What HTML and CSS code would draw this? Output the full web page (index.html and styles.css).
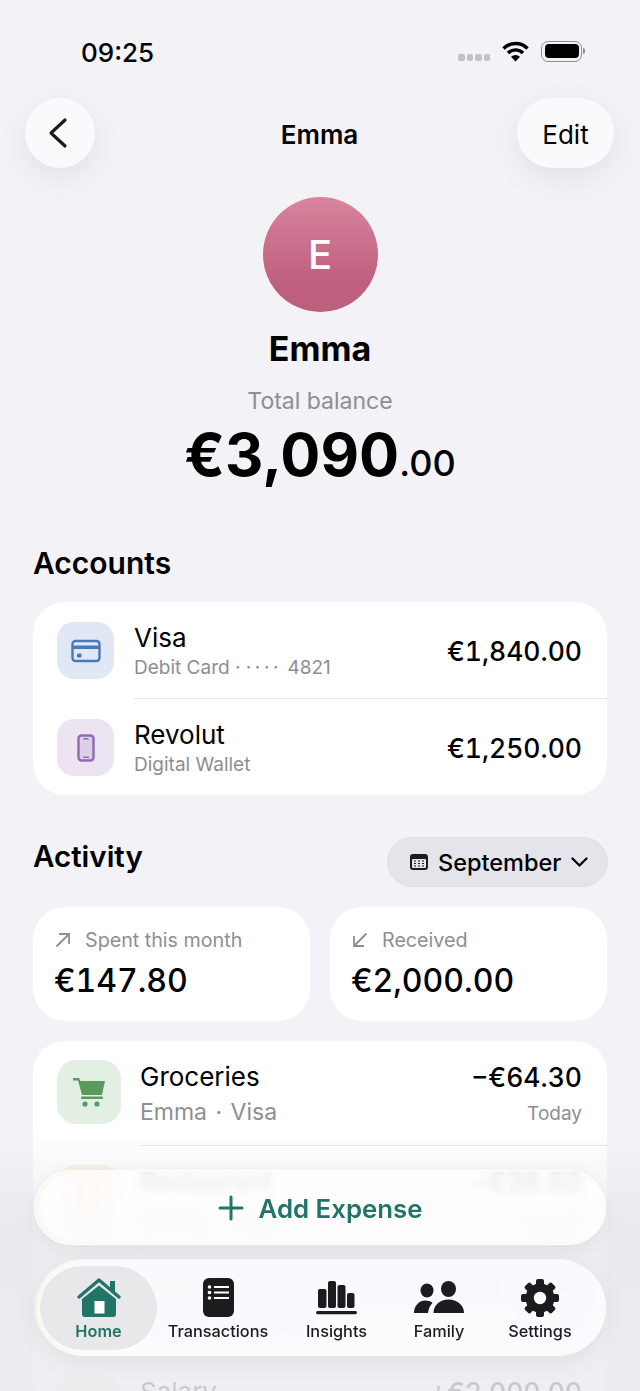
FILE: index.html
```html
<!DOCTYPE html>
<html lang="en">
<head>
    <meta charset="UTF-8">
    <meta name="viewport" content="width=device-width, initial-scale=1.0">
    <title>Emma</title>
    <link rel="stylesheet" href="styles.css">
</head>
<body>
    <div class="page">
        <!-- status bar -->
        <div class="status">
            <span class="time">09:25</span>
            <div class="status-icons">
                <div class="signal"><i></i><i></i><i></i><i></i></div>
                <svg class="wifi" width="27" height="21" viewBox="0 0 27 21">
                    <path d="M1.5 7.5a17 17 0 0 1 24 0" fill="none" stroke="#000" stroke-width="3.4"/>
                    <path d="M6 12a10.6 10.6 0 0 1 15 0" fill="none" stroke="#000" stroke-width="3.4"/>
                    <path d="M13.500 20.500 9 15.800a6.400 6.400 0 0 1 9 0z"/>
                </svg>
                <div class="battery"><div class="battery-fill"></div></div>
            </div>
        </div>

        <!-- top nav -->
        <div class="topbar">
            <button class="round-btn back">
                <svg width="22" height="32" viewBox="0 0 22 32"><path d="M18 3 4 16 18 29" fill="none" stroke="#1c1c1e" stroke-width="3.200" stroke-linecap="round" stroke-linejoin="round"/></svg>
            </button>
            <div class="topbar-title">Emma</div>
            <button class="round-btn edit">Edit</button>
        </div>

        <!-- profile -->
        <div class="profile">
            <div class="avatar">E</div>
            <div class="profile-name">Emma</div>
            <div class="balance-label">Total balance</div>
            <div class="balance">€3,090<span class="cents">.00</span></div>
        </div>

        <!-- accounts -->
        <h2 class="heading accounts-heading">Accounts</h2>
        <div class="card accounts">
            <div class="account">
                <div class="acc-icon blue">
                    <svg width="30" height="24" viewBox="0 0 30 24"><rect x="1.500" y="2" width="27" height="20" rx="3" fill="#dfe8f4" stroke="#4a78b8" stroke-width="2.400"/><rect x="1.500" y="6.500" width="27" height="3.500" fill="#4a78b8"/><rect x="6" y="14.500" width="4.500" height="4" rx="1" fill="#4a78b8"/></svg>
                </div>
                <div class="acc-text">
                    <div class="acc-name">Visa</div>
                    <div class="acc-sub">Debit Card · <span class="acc-dots">····</span> 4821</div>
                </div>
                <div class="acc-amount">€1,840.00</div>
            </div>
            <div class="account">
                <div class="acc-icon purple">
                    <svg width="18" height="28" viewBox="0 0 18 28"><rect x="1.500" y="1.500" width="15" height="25" rx="3" fill="#dccfe8" stroke="#9268b4" stroke-width="2.400"/><rect x="6.500" y="4" width="5" height="1.600" fill="#9268b4"/><rect x="6" y="22.500" width="6" height="1.400" fill="#9268b4"/></svg>
                </div>
                <div class="acc-text">
                    <div class="acc-name">Revolut</div>
                    <div class="acc-sub">Digital Wallet</div>
                </div>
                <div class="acc-amount">€1,250.00</div>
            </div>
        </div>

        <!-- activity -->
        <div class="activity-head">
            <h2 class="heading">Activity</h2>
            <div class="month-pill">
                <svg width="18" height="16" viewBox="0 0 18 16"><rect x="0" y="0" width="18" height="16" rx="3" fill="#1c1c1e"/><rect x="2" y="5" width="14" height="9" rx="1" fill="#e4e4ea"/><path d="M4 7h2M8 7h2M12 7h2M4 9.500h2M8 9.500h2M12 9.500h2M4 12h2M8 12h2M12 12h2" stroke="#1c1c1e" stroke-width="1.200"/></svg>
                <span>September</span>
                <svg width="17" height="10" viewBox="0 0 17 10"><path d="M1.500 1.500 8.500 8.500 15.500 1.500" fill="none" stroke="#000" stroke-width="2.200" stroke-linecap="round" stroke-linejoin="round"/></svg>
            </div>
        </div>

        <div class="stats">
            <div class="card stat">
                <div class="stat-label">
                    <svg width="16" height="16" viewBox="0 0 16 16"><path d="M1.500 14.500 14 2M4 2h10v10" fill="none" stroke="#8e8e93" stroke-width="1.800"/></svg>
                    <span>Spent this month</span>
                </div>
                <div class="stat-value">€147.80</div>
            </div>
            <div class="card stat">
                <div class="stat-label">
                    <svg width="16" height="16" viewBox="0 0 16 16"><path d="M14.500 1.500 2 14M2 4v10h10" fill="none" stroke="#8e8e93" stroke-width="1.800"/></svg>
                    <span>Received</span>
                </div>
                <div class="stat-value">€2,000.00</div>
            </div>
        </div>

        <!-- transactions -->
        <div class="card list">
            <div class="tx">
                <div class="tx-icon green">
                    <svg width="34" height="32" viewBox="0 0 34 32" fill="#5a9a5c"><path d="M1 2h6l1.500 3H33l-3 14H10L6 4.500H1z"/><rect x="9" y="20.500" width="22" height="2.500" rx="1"/><circle cx="13" cy="28" r="2.600"/><circle cx="25" cy="28" r="2.600"/></svg>
                </div>
                <div class="tx-text">
                    <div class="tx-name">Groceries</div>
                    <div class="tx-sub">Emma · Visa</div>
                </div>
                <div class="tx-right">
                    <div class="tx-amount">−€64.30</div>
                    <div class="tx-date">Today</div>
                </div>
            </div>
            <div class="tx">
                <div class="tx-icon orange">
                    <svg width="34" height="44" viewBox="0 0 34 44" fill="#f8a040"><rect x="7" y="2" width="6" height="40" rx="3"/><rect x="21" y="2" width="6" height="40" rx="3"/></svg>
                </div>
                <div class="tx-text">
                    <div class="tx-name">Restaurant</div>
                    <div class="tx-sub">Emma · Visa</div>
                </div>
                <div class="tx-right">
                    <div class="tx-amount">−€38.50</div>
                    <div class="tx-date">Sep 21</div>
                </div>
            </div>
            <div class="tx">
                <div class="tx-icon orange">
                    <svg width="34" height="34" viewBox="0 0 34 34" fill="#f8a040"><circle cx="17" cy="17" r="12"/></svg>
                </div>
                <div class="tx-text">
                    <div class="tx-name">Children</div>
                    <div class="tx-sub">Emma · Revolut</div>
                </div>
                <div class="tx-right">
                    <div class="tx-amount">−€45.00</div>
                    <div class="tx-date">Sep 20</div>
                </div>
            </div>
            <div class="tx">
                <div class="tx-icon green"></div>
                <div class="tx-text">
                    <div class="tx-name">Salary</div>
                    <div class="tx-sub">Emma · Visa</div>
                </div>
                <div class="tx-right">
                    <div class="tx-amount">+€2,000.00</div>
                    <div class="tx-date">Sep 1</div>
                </div>
            </div>
        </div>

        <!-- bottom fade + floating controls -->
        <div class="bottom-fade"></div>

        <button class="add-expense">
            <svg width="26" height="26" viewBox="0 0 26 26"><path d="M13 2v22M2 13h22" fill="none" stroke="#217568" stroke-width="3" stroke-linecap="round"/></svg>
            <span>Add Expense</span>
        </button>

        <nav class="tabbar">
            <div class="tab active">
                <svg width="44" height="40" viewBox="0 0 44 40">
                    <path d="M2 19 22 2l20 17" fill="none" stroke="#217568" stroke-width="3.400" stroke-linecap="round" stroke-linejoin="round"/>
                    <rect x="33" y="3" width="5" height="10" fill="#217568"/>
                    <path d="M5 21 22 7.500 39 21v15a3 3 0 0 1-3 3H8a3 3 0 0 1-3-3z" fill="#217568"/>
                    <rect x="17.500" y="23" width="10" height="12.500" fill="#fff"/>
                </svg>
                <span>Home</span>
            </div>
            <div class="tab">
                <svg width="31" height="40" viewBox="0 0 31 40">
                    <rect width="31" height="39" rx="6" fill="#1c1c1e"/>
                    <path d="M11 9h15M11 14.500h15M11 20h15" stroke="#fff" stroke-width="2"/>
                    <circle cx="6.500" cy="9" r="1.800" fill="#fff"/><circle cx="6.500" cy="14.500" r="1.800" fill="#fff"/><circle cx="6.500" cy="20" r="1.800" fill="#fff"/>
                </svg>
                <span>Transactions</span>
            </div>
            <div class="tab">
                <svg width="41" height="40" viewBox="0 0 41 40" fill="#1c1c1e">
                    <rect x="2" y="11" width="8.500" height="19" rx="2"/>
                    <rect x="12" y="3" width="8" height="27" rx="2"/>
                    <rect x="21.500" y="7" width="8" height="23" rx="2"/>
                    <rect x="31" y="15" width="7.500" height="15" rx="2"/>
                    <rect x="0" y="33" width="41" height="3.200" rx="1.600"/>
                </svg>
                <span>Insights</span>
            </div>
            <div class="tab">
                <svg width="50" height="40" viewBox="0 0 50 40" fill="#1c1c1e">
                    <ellipse cx="13" cy="12.500" rx="6.500" ry="7"/>
                    <ellipse cx="34.500" cy="11" rx="7.500" ry="8"/>
                    <path d="M0 35c0-7 5-12.500 11-12.500 3 0 5.500.8 7.500 2.300-2.500 2.700-4 6-4.500 10.200z"/>
                    <path d="M19.500 35c0-8 6.500-13.500 15-13.500S50 27 50 35z"/>
                </svg>
                <span>Family</span>
            </div>
            <div class="tab">
                <svg width="40" height="40" viewBox="0 0 40 40">
                    <g fill="#1c1c1e">
                        <circle cx="20" cy="20" r="14.500"/>
                        <rect x="16" y="1" width="8" height="38" rx="2"/>
                        <rect x="16" y="1" width="8" height="38" rx="2" transform="rotate(45 20 20)"/>
                        <rect x="16" y="1" width="8" height="38" rx="2" transform="rotate(90 20 20)"/>
                        <rect x="16" y="1" width="8" height="38" rx="2" transform="rotate(135 20 20)"/>
                    </g>
                    <circle cx="20" cy="20" r="6.200" fill="#fafafd"/>
                </svg>
                <span>Settings</span>
            </div>
        </nav>
    </div>
</body>
</html>
```

FILE: styles.css
```css
* {
    margin: 0;
    padding: 0;
    box-sizing: border-box;
}

html, body {
    width: 640px;
    height: 1391px;
    overflow: hidden;
    background-color: #f2f2f7;
    font-family: Inter, "Liberation Sans", sans-serif;
    color: #000;
}

.page {
    position: relative;
    width: 640px;
    height: 1391px;
    overflow: hidden;
}

/* status bar */
.status {
    display: flex;
    justify-content: space-between;
    align-items: center;
    height: 98px;
    padding: 7px 58px 0 81px;
}

.time {
    font-size: 26px;
    font-weight: 500;
    line-height: 32px;
}

.status-icons {
    display: flex;
    align-items: center;
    gap: 12px;
    margin-top: -3px;
}

.signal {
    display: flex;
    gap: 2px;
    margin-top: 13px;
}

.signal i {
    width: 6.500px;
    height: 6.500px;
    border-radius: 2px;
    background-color: #c3c3c7;
}

.battery {
    position: relative;
    width: 41px;
    height: 21px;
    padding: 2.500px;
    border: 1.500px solid #8e8e93;
    border-radius: 7px;
}

.battery:after {
    content: "";
    position: absolute;
    right: -4px;
    top: 6px;
    width: 2px;
    height: 6px;
    border-radius: 0 2px 2px 0;
    background-color: #8e8e93;
}

.battery-fill {
    height: 100%;
    border-radius: 4px;
    background-color: #000;
}

/* top nav */
.topbar {
    display: grid;
    grid-template-columns: 1fr auto 1fr;
    align-items: center;
    height: 70px;
    padding: 0 26px 0 25px;
}

.round-btn {
    display: flex;
    align-items: center;
    justify-content: center;
    height: 70px;
    border: none;
    border-radius: 35px;
    background-color: #fafafd;
    box-shadow: 0 10px 30px rgba(0, 0, 0, 0.07);
    font-family: inherit;
    font-size: 26px;
    color: #000;
}

.back {
    width: 70px;
    padding-right: 4px;
}

.edit {
    width: 97px;
    padding-top: 2px;
    justify-self: end;
}

.topbar-title {
    padding-top: 2px;
    font-size: 26px;
    font-weight: 600;
}

/* profile */
.profile {
    display: flex;
    flex-direction: column;
    align-items: center;
    margin-top: 29px;
}

.avatar {
    display: flex;
    align-items: center;
    justify-content: center;
    width: 115px;
    height: 115px;
    border-radius: 50%;
    background: linear-gradient(180deg, #d9849e 0%, #bd5f7d 75%);
    color: #fff;
    font-size: 40px;
    font-weight: 500;
}

.profile-name {
    margin-top: 15px;
    font-size: 34px;
    font-weight: 700;
    line-height: 44px;
}

.balance-label {
    margin-top: 15px;
    font-size: 23px;
    line-height: 30px;
    color: #8e8e93;
}

.balance {
    margin-top: 3px;
    font-size: 59.500px;
    font-weight: 700;
    line-height: 70px;
}

.cents {
    font-size: 36px;
    font-weight: 500;
}

/* sections */
.heading {
    font-size: 30px;
    font-weight: 600;
    line-height: 38px;
}

.accounts-heading {
    margin: 46px 33px 20px;
}

.card {
    background-color: #fff;
    border-radius: 32px;
}

.accounts {
    margin: 0 33px;
    height: 193px;
}

.account {
    display: flex;
    align-items: center;
    height: 97px;
    padding: 0 25px 0 24px;
}

.acc-icon {
    display: flex;
    align-items: center;
    justify-content: center;
    flex-shrink: 0;
    width: 57px;
    height: 57px;
    border-radius: 17px;
}

.blue {
    background-color: #dfe8f4;
}

.purple {
    background-color: #ece4f1;
}

.green {
    background-color: #e3efe3;
}

.orange {
    background-color: #fcefe0;
}

.acc-text {
    flex: 1;
    align-self: stretch;
    display: flex;
    flex-direction: column;
    justify-content: center;
    padding-top: 2px;
    margin-left: 20px;
}

.acc-name {
    font-size: 26px;
    line-height: 32px;
}

.acc-sub {
    margin-top: 1px;
    font-size: 19px;
    line-height: 26px;
    color: #8e8e93;
}

.acc-dots {
    letter-spacing: 3.600px;
}

.account:first-child {
    position: relative;
}

.account:first-child:after {
    content: "";
    position: absolute;
    left: 101px;
    right: 0;
    top: 96px;
    height: 1px;
    background-color: #e4e4e8;
}

.acc-amount {
    font-size: 26.500px;
    font-weight: 500;
    font-variant-numeric: tabular-nums;
}

/* activity */
.activity-head {
    display: flex;
    justify-content: space-between;
    align-items: flex-start;
    margin: 42px 32px 20px 33px;
}

.activity-head .heading {
    margin-top: 0;
    font-size: 29.500px;
}

.month-pill {
    display: flex;
    align-items: center;
    gap: 10px;
    width: 221px;
    height: 50px;
    padding-left: 22px;
    border-radius: 25px;
    border: 1px solid #e0e0e6;
    background-color: #e4e4ea;
    font-size: 23.500px;
    font-weight: 500;
}

.stats {
    display: flex;
    gap: 20px;
    margin: 0 33px 20px;
}

.stat {
    flex: 1;
    height: 114px;
    padding: 21px 22px 0;
}

.stat-label {
    display: flex;
    align-items: center;
    gap: 14px;
    font-size: 19.700px;
    line-height: 24px;
    color: #8e8e93;
}

.stat-value {
    margin: 9px 0 0 -1px;
    font-size: 32px;
    font-weight: 500;
    line-height: 40px;
    font-variant-numeric: tabular-nums;
}

/* transaction list */
.list {
    margin: 0 33px;
}

.tx {
    position: relative;
    display: flex;
    align-items: flex-start;
    height: 105px;
    padding: 19px 25px 0 24px;
}

.tx:after {
    content: "";
    position: absolute;
    left: 107px;
    right: 0;
    bottom: 0;
    height: 1px;
    background-color: #e4e4e8;
}

.tx-icon {
    display: flex;
    align-items: center;
    justify-content: center;
    flex-shrink: 0;
    width: 64px;
    height: 64px;
    border-radius: 19px;
}

.tx-text {
    flex: 1;
    margin-left: 19px;
}

.tx-name {
    font-size: 26px;
    line-height: 34px;
}

.tx-sub {
    margin-top: 1px;
    font-size: 23px;
    word-spacing: 2px;
    line-height: 34px;
    color: #8e8e93;
}

.tx-right {
    text-align: right;
}

.tx-amount {
    font-size: 26.500px;
    font-weight: 500;
    line-height: 34px;
    font-variant-numeric: tabular-nums;
}

.tx-date {
    margin-top: 3px;
    font-size: 19px;
    line-height: 34px;
    color: #8e8e93;
}

/* floating stuff over the list */
.bottom-fade {
    position: absolute;
    left: 0;
    right: 0;
    top: 1130px;
    bottom: 0;
    background: linear-gradient(180deg, rgba(236, 236, 240, 0) 0%, rgba(232, 232, 236, 0.8) 40%, rgba(236, 236, 240, 0.85) 100%);
}

.add-expense {
    position: absolute;
    left: 34px;
    top: 1170px;
    display: flex;
    align-items: center;
    justify-content: center;
    gap: 15px;
    width: 572px;
    height: 75px;
    border: 1px solid rgba(255, 255, 255, 0.8);
    border-radius: 38px;
    background-color: rgba(255, 255, 255, 0.85);
    backdrop-filter: blur(4px);
    box-shadow: 0 4px 20px rgba(0, 0, 0, 0.05), inset 3px 0 5px rgba(250, 236, 216, 0.5);
    font-family: inherit;
    font-size: 25.800px;
    font-weight: 600;
    color: #217568;
}

.add-expense span {
    padding-top: 2px;
}

.tabbar {
    position: absolute;
    left: 35px;
    top: 1259px;
    display: grid;
    grid-template-columns: 117px 122px 115px 90px 112px;
    width: 571px;
    height: 97px;
    padding: 7px 5px 6px;
    border-radius: 49px;
    background-color: rgba(251, 251, 254, 0.95);
    backdrop-filter: blur(3px);
    box-shadow: 0 6px 24px rgba(0, 0, 0, 0.06), inset 3px 0 4px rgba(250, 236, 216, 0.6);
}

.tab {
    display: flex;
    flex-direction: column;
    align-items: center;
    padding-top: 12px;
    font-size: 16.300px;
    font-weight: 500;
    color: #1c1c1e;
}

.tab span {
    margin-top: 3px;
    line-height: 20px;
}

.tab.active {
    border-radius: 42px;
    background-color: #e8e8ea;
    color: #217568;
    font-weight: 600;
}
```
